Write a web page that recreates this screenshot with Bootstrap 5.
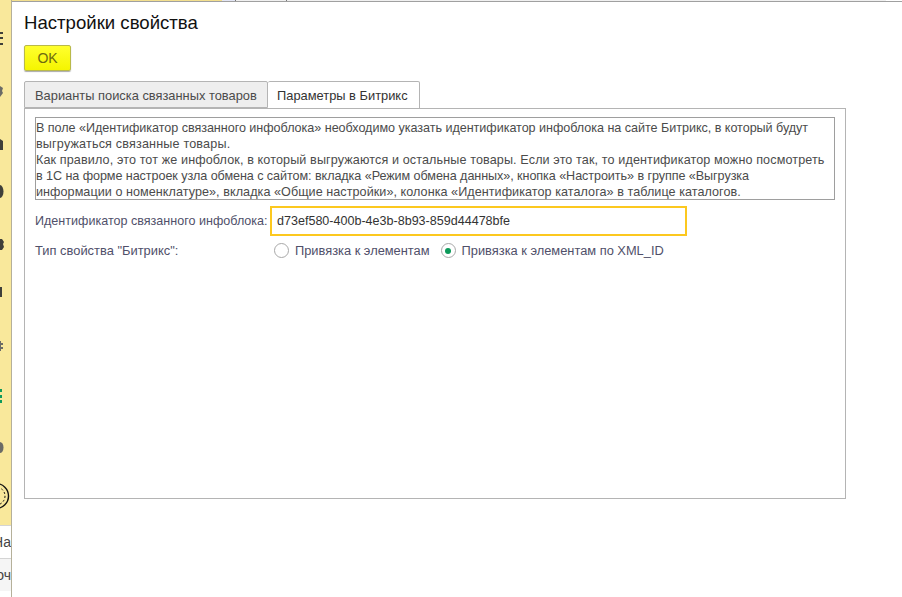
<!DOCTYPE html>
<html lang="ru">
<head>
<meta charset="utf-8">
<title>Настройки свойства</title>
<link rel="stylesheet" href="https://cdn.jsdelivr.net/npm/bootstrap@5.3.0/dist/css/bootstrap.min.css">
<style>
html,body{height:100%;overflow:hidden}
body{font-family:"Liberation Sans",Arial,sans-serif;font-size:12px;color:#4b4b4b;background:#fff}
.shell{height:597px}
.rail{width:12px;flex:none;background:#fff;border-right:1px solid #b5b09a;overflow:hidden}
.rail-top{height:525px;background:#f9e89b;flex:none}
.rail-top svg{display:block}
.rail-row{height:33px;flex:none;background:#f5f5f5;border-top:1px solid #d4d4d4;color:#444;font-size:14px;white-space:nowrap;line-height:32px;overflow:hidden}
.rail-row.first{background:#fff}
.rail-row span{display:block;width:11px;direction:rtl;overflow:hidden}
.dlg{width:834px;flex:none}
.strip{height:2px;border-bottom:1px solid #a0a0a0;margin-right:-56px}
.strip div{height:1px}
.seg-a{width:210px;background:#f3df8e}
.seg-b{width:13px;background:#e3e6f5}
.seg-c{width:51px;background:#f0f0f0;border-left:1px solid #777}
.seg-d{width:600px;background:#f0f0f0;border-left:1px solid #777}
.dlg-in{padding:9px 0 0 12px}
.dlg-title{font-size:18.6px;line-height:24px;color:#111;margin:0 0 10px}
.ok-btn{display:block;width:47px;height:26px;padding:0;font-size:14px;line-height:24px;color:#6e6a10;background:linear-gradient(#ffff2e,#f5f500);border:1px solid #b9b94a;border-radius:2px;box-shadow:0 1px 1px #aaa;margin-bottom:10px}
.tabs-row{height:27px;position:relative;z-index:1}
.tab-a,.tab-b{font-size:12.87px;line-height:27px;padding:0 10px;border:1px solid #b4b4b4;border-radius:2px 2px 0 0;white-space:nowrap}
.tab-a{background:#eee;width:244px;height:27px;color:#4b4b4b}
.tab-b{background:#fff;border-left:0;height:28px;width:152px;color:#333;padding-left:9px}
.tab-body{height:391px;border:1px solid #b4b4b4;padding:8px 10px 0 10px}
.note{border:1px solid #9e9e9e;height:83px;font-size:12.6px;line-height:16px;padding:2px 0 0 0;color:#4b4b4b;white-space:nowrap}
.note span{display:block}
.note .l1{letter-spacing:-.04px}
.note .l2{letter-spacing:.17px}
.note .l3{letter-spacing:.115px}
.note .l4{letter-spacing:-.07px}
.note .l5{letter-spacing:.055px}
.field-row{height:30px;margin-top:6px}
.lbl{width:235px;font-size:12.9px;color:#50506a;flex:none;white-space:nowrap}
.lbl-wide{font-size:12.57px}
.idf{width:417px;height:30px;border:2px solid #fcc81f;padding:0 5px;font-size:12.55px;color:#333;display:flex;align-items:center;background:#fff}
.type-row{margin-top:6px;height:17px;line-height:17px}
.opt{font-size:12.85px;color:#50506a;white-space:nowrap;gap:6px}
.opt-a{margin-left:4px;margin-right:11px}
.rad{width:15px;height:15px;border:1px solid #a8a8a8;border-radius:50%;display:inline-flex;align-items:center;justify-content:center;background:#fff;flex:none}
.rad i{display:block;width:6px;height:6px;border-radius:50%;background:#0d9a5a}
</style>
</head>
<body>
<div class="shell d-flex">
  <div class="rail d-flex flex-column">
    <div class="rail-top">
      <svg width="11" height="525" viewBox="0 0 11 525" aria-hidden="true">
        <g fill="#3f3f3a">
          <rect x="0" y="32" width="3" height="2"/><rect x="0" y="37" width="3" height="2"/><rect x="0" y="43" width="3" height="2"/>
          <path d="M0 139l3 2v9H0z"/>
          <path d="M0 185a3.500 6.500 0 0 1 0 13z"/>
          <path d="M0 239h2l2 3-1 2 1 3-2 3H0z"/>
          <rect x="0" y="287" width="2" height="10"/>
        </g>
        <g fill="#6b6b66">
          <path d="M0 86l3 2-1 3 1 2-3 4z"/>
          <path d="M0 341h1v2h2v2H1v2h2v2H1v2H0z"/>
          <path d="M0 442a3.500 5.500 0 0 1 0 11z"/>
        </g>
        <g fill="#0f9a5c">
          <rect x="0" y="389" width="2" height="3"/><rect x="0" y="395" width="2" height="3"/><rect x="0" y="400" width="2" height="3"/>
        </g>
        <g fill="none" stroke="#111">
          <circle cx="-4" cy="496" r="12.500" stroke-width="1.400"/>
          <circle cx="-4" cy="496" r="9" stroke-width="1" stroke-dasharray="2 2"/>
        </g>
      </svg>
    </div>
    <div class="rail-row first"><span>На</span></div>
    <div class="rail-row"><span>оч</span></div>
  </div>
  <div class="dlg">
    <div class="strip d-flex"><div class="seg-a"></div><div class="seg-b"></div><div class="seg-c"></div><div class="seg-d"></div></div>
    <div class="dlg-in">
      <h1 class="dlg-title">Настройки свойства</h1>
      <button class="ok-btn" type="button">OK</button>
      <div class="tabs-row d-flex">
        <div class="tab-a">Варианты поиска связанных товаров</div>
        <div class="tab-b">Параметры в Битрикс</div>
      </div>
      <div class="tab-body">
        <div class="note">
          <span class="l1">В поле «Идентификатор связанного инфоблока» необходимо указать идентификатор инфоблока на сайте Битрикс, в который будут</span>
          <span class="l2">выгружаться связанные товары.</span>
          <span class="l3">Как правило, это тот же инфоблок, в который выгружаются и остальные товары. Если это так, то идентификатор можно посмотреть</span>
          <span class="l4">в 1С на форме настроек узла обмена с сайтом: вкладка «Режим обмена данных», кнопка «Настроить» в группе «Выгрузка</span>
          <span class="l5">информации о номенклатуре», вкладка «Общие настройки», колонка «Идентификатор каталога» в таблице каталогов.</span>
        </div>
        <div class="field-row d-flex align-items-center">
          <div class="lbl lbl-wide">Идентификатор связанного инфоблока:</div>
          <div class="idf">d73ef580-400b-4e3b-8b93-859d44478bfe</div>
        </div>
        <div class="type-row d-flex align-items-center">
          <div class="lbl">Тип свойства "Битрикс":</div>
          <div class="d-flex align-items-center opt opt-a"><span class="rad"></span><span>Привязка к элементам</span></div>
          <div class="d-flex align-items-center opt"><span class="rad"><i></i></span><span>Привязка к элементам по XML_ID</span></div>
        </div>
      </div>
    </div>
  </div>
</div>
<script src="https://cdn.jsdelivr.net/npm/bootstrap@5.3.0/dist/js/bootstrap.bundle.min.js"></script>
</body>
</html>
